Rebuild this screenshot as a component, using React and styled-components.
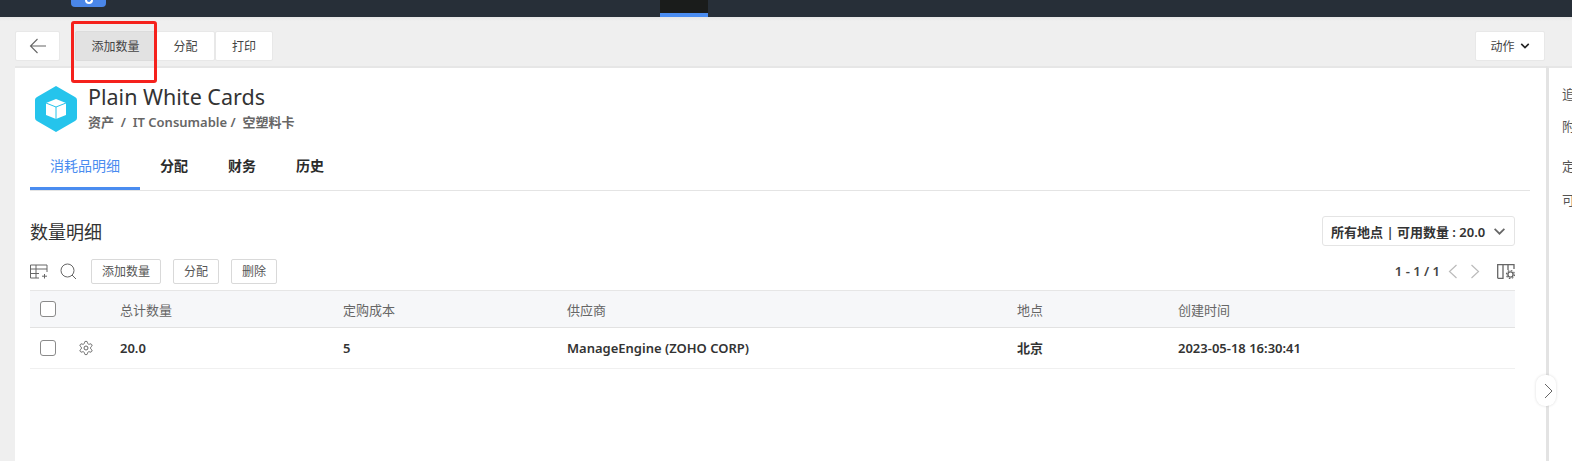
import React from 'react';
import styled, { createGlobalStyle } from 'styled-components';

const GlobalStyle = createGlobalStyle`
    html, body {
        margin: 0;
        padding: 0;
        height: 461px;
        overflow: hidden;
        background: #efefef;
        font-family: "Noto Sans", "Noto Sans CJK SC", sans-serif;
        color: #333;
    }
    * { box-sizing: border-box; }
`;

const Page = styled.div`
    position: relative;
    width: 1572px;
    height: 461px;
    overflow: hidden;
    display: flex;
    flex-direction: column;
`;

// 상단 어두운 바
const TopBar = styled.div`
    height: 17px;
    flex: none;
    background: #272f38;
    display: flex;
    padding-left: 71px;
`;

const LogoStub = styled.div`
    width: 35px;
    height: 7px;
    background: #4a86e8;
    border-radius: 0 0 4px 4px;
    display: flex;
    justify-content: center;
`;

const LogoMark = styled.div`
    width: 8px;
    height: 4px;
    border: 2px solid #fff;
    border-top: 0;
    border-radius: 0 0 4px 4px;
`;

const ActiveTab = styled.div`
    width: 48px;
    height: 17px;
    margin-left: 554px;
    background: #1a1c1b;
    border-bottom: 4px solid #4a8cf0;
`;

const ActionBar = styled.div`
    height: 49px;
    flex: none;
    padding: 14px 27px 0 15px;
    display: flex;
    align-items: flex-start;
    background: linear-gradient(#e6e6e6, #efefef 4px);
`;

const ActionButton = styled.div`
    height: 30px;
    background: ${props => props.active ? '#e2e2e2' : '#fff'};
    border: 1px solid ${props => props.active ? '#dcdcdc' : '#e8e8e8'};
    border-radius: 2px;
    display: flex;
    align-items: center;
    justify-content: center;
    gap: 5px;
    font-size: 12px;
    color: #444;
    width: ${props => props.w}px;
    margin-left: ${props => props.ml || 0}px;
`;

const Spacer = styled.div`
    flex: 1;
`;

const Body = styled.div`
    flex: 1;
    display: flex;
    padding-left: 15px;
`;

const Main = styled.div`
    width: 1531px;
    background: #fff;
    border-top: 2px solid #e6e6e6;
    padding: 0 16px 0 15px;
`;

const Side = styled.div`
    flex: 1;
    background: #fff;
    border-top: 2px solid #e6e6e6;
    border-left: 3px solid #e3e3e3;
    padding: 16px 0 0 13px;
    white-space: nowrap;
    overflow: hidden;
`;

const SideLabel = styled.div`
    font-size: 13px;
    line-height: 20px;
    color: #555;
    margin-bottom: ${props => props.mb}px;
`;

const AssetHead = styled.div`
    height: 68px;
    padding: 17px 0 0 4px;
    display: flex;
    gap: 10px;
`;

const AssetTitle = styled.div`
    font-size: 21.5px;
    line-height: 26px;
    color: #333;
    margin-top: -1px;
`;

const Crumbs = styled.div`
    font-size: 13px;
    line-height: 18px;
    margin-top: 3px;
    font-weight: 600;
    color: #666;
    white-space: pre;
`;

const Tabs = styled.div`
    height: 55px;
    border-bottom: 1px solid #e4e4e4;
    display: flex;
    align-items: flex-start;
`;

const Tab = styled.div`
    font-size: 14px;
    font-weight: ${props => props.active ? 400 : 600};
    color: ${props => props.active ? '#4a8cf0' : '#2b2b2b'};
    padding: ${props => props.active ? '7px 20px 0' : '4px 0 0'};
    margin-right: ${props => props.active ? 20 : 40}px;
    display: flex;
    align-items: center;
    height: 54px;
    border-bottom: ${props => props.active ? '3px solid #4a8cf0' : '0'};
`;

const SectionHead = styled.div`
    margin-top: 24px;
    height: 32px;
    padding-right: 15px;
    display: flex;
    align-items: center;
    justify-content: space-between;
`;

const SectionTitle = styled.div`
    font-size: 18px;
    color: #333;
`;

const LocationSelect = styled.div`
    width: 193px;
    height: 30px;
    background: #fff;
    border: 1px solid #e4e4e4;
    border-radius: 3px;
    padding: 0 8px;
    display: flex;
    align-items: center;
    justify-content: space-between;
    font-size: 13px;
    font-weight: 600;
    color: #333;
    white-space: nowrap;
`;

const ListTools = styled.div`
    margin-top: 11px;
    height: 26px;
    padding-right: 15px;
    display: flex;
    align-items: center;
`;

const ToolIcon = styled.svg`
    flex: none;
    margin-right: ${props => props.mr || 0}px;
`;

const OutlineButton = styled.div`
    height: 25px;
    width: ${props => props.w}px;
    margin-right: 12px;
    border: 1px solid #d9d9d9;
    border-radius: 2px;
    font-size: 12px;
    color: #555;
    display: flex;
    align-items: center;
    justify-content: center;
`;

const Pager = styled.div`
    font-size: 13px;
    font-weight: 600;
    color: #444;
    margin-right: 8px;
`;

const Row = styled.div`
    width: 1485px;
    display: grid;
    grid-template-columns: 90px 223px 224px 450px 161px 1fr;
    align-items: center;
    height: ${props => props.head ? 38 : 41}px;
    padding-bottom: ${props => props.head ? 0 : 1}px;
    font-size: 13px;
    font-weight: ${props => props.head ? 400 : 600};
    color: ${props => props.head ? '#666' : '#333'};
    background: ${props => props.head ? '#f6f7f9' : '#fff'};
    border-top: ${props => props.head ? '1px solid #e6e6e6' : '0'};
    border-bottom: 1px solid ${props => props.head ? '#e2e2e2' : '#f0f0f0'};
    margin-top: ${props => props.head ? 6 : 0}px;
`;

const CheckCell = styled.div`
    display: flex;
    align-items: center;
    padding-left: 10px;
    gap: 22px;
`;

const Check = styled.div`
    width: 16px;
    height: 16px;
    border: 1px solid #8a8a8a;
    border-radius: 3px;
    background: #fff;
`;

const Collapse = styled.div`
    position: absolute;
    left: 1536px;
    top: 375px;
    width: 20px;
    height: 31px;
    padding-left: 4px;
    background: #fff;
    border-radius: 9px;
    box-shadow: 0 0 3px rgba(0, 0, 0, 0.14);
    display: flex;
    align-items: center;
    justify-content: center;
`;

// 스크린샷에 그려진 빨간 표시
const Highlight = styled.div`
    position: absolute;
    left: 71px;
    top: 21px;
    width: 86px;
    height: 62px;
    border: 3px solid #f5211c;
    border-radius: 3px;
`;

const BoxIcon = () => (
    <svg width="44" height="48" viewBox="0 0 44 48" style={{ flex: 'none' }}>
        <path d="M22 1 L41 12 Q43 13 43 15 L43 33 Q43 35 41 36 L22 47 L3 36 Q1 35 1 33 L1 15 Q1 13 3 12 Z" fill="#25c4ec" />
        <path d="M22 14 L32 18 L32 30 L22 34 L12 30 L12 18 Z" fill="#fff" />
        <path d="M12 18 L22 22 L32 18 M22 22 L22 34" fill="none" stroke="#25c4ec" strokeWidth="1" />
    </svg>
);

const Chevron = ({ color = '#666', size = 12, sw = 1.6 }) => (
    <svg width={size} height={size} viewBox="0 0 12 12">
        <path d="M1.5 3.5 L6 8 L10.5 3.5" fill="none" stroke={color} strokeWidth={sw} />
    </svg>
);

const App = () => (
    <Page>
        <GlobalStyle />
        <TopBar>
            <LogoStub><LogoMark /></LogoStub>
            <ActiveTab />
        </TopBar>
        <ActionBar>
            <ActionButton w={45}>
                <svg width="18" height="16" viewBox="0 0 18 16">
                    <path d="M17 8 H1.5 M8.5 1 L1.5 8 L8.5 15" fill="none" stroke="#666" strokeWidth="1.1" />
                </svg>
            </ActionButton>
            <ActionButton active w={81} ml={15}>添加数量</ActionButton>
            <ActionButton w={59}>分配</ActionButton>
            <ActionButton w={58}>打印</ActionButton>
            <Spacer />
            <ActionButton w={70}>动作 <Chevron color="#222" size={10} sw={1.9} /></ActionButton>
        </ActionBar>
        <Body>
            <Main>
                <AssetHead>
                    <BoxIcon />
                    <div>
                        <AssetTitle>Plain White Cards</AssetTitle>
                        <Crumbs>资产  /  IT Consumable /  空塑料卡</Crumbs>
                    </div>
                </AssetHead>
                <Tabs>
                    <Tab active>消耗品明细</Tab>
                    <Tab>分配</Tab>
                    <Tab>财务</Tab>
                    <Tab>历史</Tab>
                </Tabs>
                <SectionHead>
                    <SectionTitle>数量明细</SectionTitle>
                    <LocationSelect>
                        所有地点 | 可用数量 : 20.0
                        <Chevron color="#666" size={13} />
                    </LocationSelect>
                </SectionHead>
                <ListTools>
                    <ToolIcon width="18" height="15" viewBox="0 0 18 15" mr={12}>
                        <path d="M.5 14 V1 H17 V8 M.5 5 H17 M.5 9.5 H9 M.5 14 H9 M6 1 V14 M14.5 10 V14.5 M12 12.2 H17" fill="none" stroke="#666" strokeWidth="1" />
                    </ToolIcon>
                    <ToolIcon width="17" height="17" viewBox="0 0 17 17" mr={14}>
                        <circle cx="7.5" cy="7.5" r="6.5" fill="none" stroke="#666" strokeWidth="1" />
                        <path d="M12 12 L16 16" stroke="#666" strokeWidth="1" />
                    </ToolIcon>
                    <OutlineButton w={70}>添加数量</OutlineButton>
                    <OutlineButton w={46}>分配</OutlineButton>
                    <OutlineButton w={46}>删除</OutlineButton>
                    <Spacer />
                    <Pager>1 - 1 / 1</Pager>
                    <ToolIcon width="10" height="15" viewBox="0 0 10 15" mr={12}>
                        <path d="M8.5 1 L1.5 7.5 L8.5 14" fill="none" stroke="#bbb" strokeWidth="1.2" />
                    </ToolIcon>
                    <ToolIcon width="10" height="15" viewBox="0 0 10 15" mr={17}>
                        <path d="M1.5 1 L8.5 7.5 L1.5 14" fill="none" stroke="#bbb" strokeWidth="1.2" />
                    </ToolIcon>
                    <ToolIcon width="18" height="15" viewBox="0 0 18 15">
                        <path d="M.7 14.3 V.7 H17 V5 M.7 14.3 H6 V.7 M11 .7 V6" fill="none" stroke="#666" strokeWidth="1.3" />
                        <circle cx="13.5" cy="10.5" r="2.6" fill="none" stroke="#666" strokeWidth="1.4" />
                        <circle cx="13.5" cy="10.5" r="4" fill="none" stroke="#666" strokeWidth="1.2" strokeDasharray="1.6 1.5" />
                    </ToolIcon>
                </ListTools>
                <Row head>
                    <CheckCell><Check /></CheckCell>
                    <div>总计数量</div>
                    <div>定购成本</div>
                    <div>供应商</div>
                    <div>地点</div>
                    <div>创建时间</div>
                </Row>
                <Row>
                    <CheckCell>
                        <Check />
                        <svg width="16" height="16" viewBox="0 0 24 24" fill="none" stroke="#666" strokeWidth="1.5">
                            <path d="M12.22 2h-.44a2 2 0 0 0-2 2v.18a2 2 0 0 1-1 1.73l-.43.25a2 2 0 0 1-2 0l-.15-.08a2 2 0 0 0-2.73.73l-.22.38a2 2 0 0 0 .73 2.73l.15.1a2 2 0 0 1 1 1.72v.51a2 2 0 0 1-1 1.74l-.15.09a2 2 0 0 0-.73 2.73l.22.38a2 2 0 0 0 2.73.73l.15-.08a2 2 0 0 1 2 0l.43.25a2 2 0 0 1 1 1.73V20a2 2 0 0 0 2 2h.44a2 2 0 0 0 2-2v-.18a2 2 0 0 1 1-1.73l.43-.25a2 2 0 0 1 2 0l.15.08a2 2 0 0 0 2.73-.73l.22-.39a2 2 0 0 0-.73-2.73l-.15-.08a2 2 0 0 1-1-1.74v-.5a2 2 0 0 1 1-1.74l.15-.09a2 2 0 0 0 .73-2.73l-.22-.38a2 2 0 0 0-2.73-.73l-.15.08a2 2 0 0 1-2 0l-.43-.25a2 2 0 0 1-1-1.73V4a2 2 0 0 0-2-2z" />
                            <circle cx="12" cy="12" r="3" />
                        </svg>
                    </CheckCell>
                    <div>20.0</div>
                    <div>5</div>
                    <div>ManageEngine (ZOHO CORP)</div>
                    <div>北京</div>
                    <div>2023-05-18 16:30:41</div>
                </Row>
            </Main>
            <Side>
                <SideLabel mb={12}>追踪</SideLabel>
                <SideLabel mb={20}>附件</SideLabel>
                <SideLabel mb={14}>定购</SideLabel>
                <SideLabel mb={0}>可用</SideLabel>
            </Side>
        </Body>
        <Collapse>
            <svg width="9" height="16" viewBox="0 0 9 16">
                <path d="M1 1 L8 8 L1 15" fill="none" stroke="#666" strokeWidth="1" />
            </svg>
        </Collapse>
        <Highlight />
    </Page>
);

export default App;
